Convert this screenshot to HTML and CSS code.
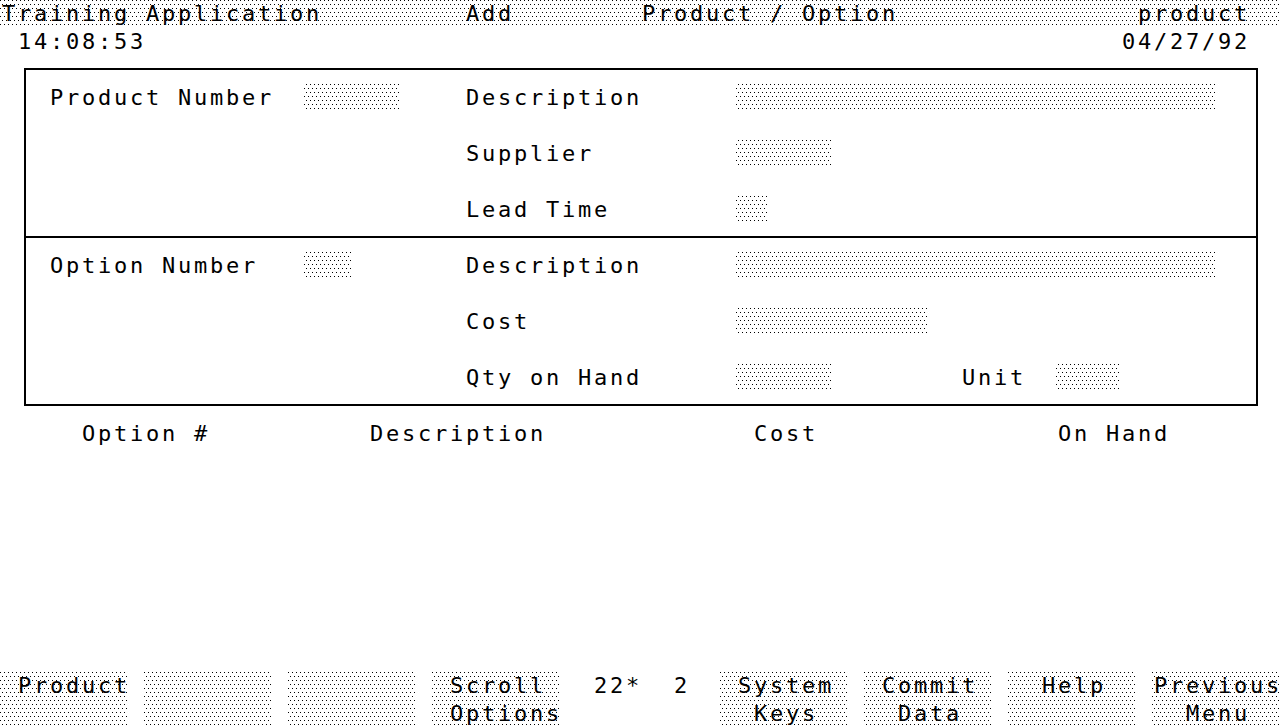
FILE: index.html
```html
<!DOCTYPE html>
<html lang="en">
<head>
    <meta charset="UTF-8">
    <title>Training Application - Add Product / Option</title>
    <link rel="stylesheet" href="styles.css">
</head>
<body>

    <div class="screen">
        <!-- Top banner -->
        <div class="title-bar stipple">
            <span>Training Application</span>
            <span>Add</span>
            <span>Product / Option</span>
            <span>product</span>
        </div>
        <div class="status-line">
            <span>14:08:53</span>
            <span>04/27/92</span>
        </div>

        <!-- Entry form -->
        <div class="form-box">
            <div class="form-block">
                <div class="lbl-left">Product Number</div>
                <div class="field stipple w6"></div>
                <div class="lbl-right">Description</div>
                <div class="field stipple w30"></div>

                <div class="lbl-right">Supplier</div>
                <div class="field stipple w6"></div>

                <div class="lbl-right">Lead Time</div>
                <div class="field stipple w2"></div>
            </div>
            <div class="form-block divided">
                <div class="lbl-left">Option Number</div>
                <div class="field stipple w3"></div>
                <div class="lbl-right">Description</div>
                <div class="field stipple w30"></div>

                <div class="lbl-right">Cost</div>
                <div class="field stipple w12"></div>

                <div class="lbl-right">Qty on Hand</div>
                <div class="field-row">
                    <div class="field stipple w6"></div>
                    <span class="unit-label">Unit</span>
                    <div class="field stipple w4"></div>
                </div>
            </div>
        </div>

        <!-- Scroll list heading -->
        <div class="list-head">
            <span>Option #</span>
            <span>Description</span>
            <span>Cost</span>
            <span>On Hand</span>
        </div>

        <!-- Function keys -->
        <div class="softkeys">
            <div class="key stipple"> Product</div>
            <div class="key stipple"></div>
            <div class="key stipple"></div>
            <div class="key stipple"> Scroll
 Options</div>
            <div class="key-status"> 22*  2</div>
            <div class="key stipple"> System
  Keys</div>
            <div class="key stipple"> Commit
  Data</div>
            <div class="key stipple">  Help</div>
            <div class="key stipple">Previous
  Menu</div>
        </div>
    </div>

</body>
</html>
```

FILE: styles.css
```css
/* Terminal grid: 80 columns x 16px, rows of 28px */
* {
    margin: 0;
    padding: 0;
    box-sizing: border-box;
}

html, body {
    background: #ffffff;
    overflow: hidden;
}

body {
    font-family: "DejaVu Sans Mono", monospace;
    font-size: 22px;
    letter-spacing: 2.755px;
    line-height: 28px;
    color: #000000;
}

.screen {
    width: 1280px;
    height: 726px;
    display: flex;
    flex-direction: column;
    overflow: hidden;
}

/* Halftone fill used for the banner, fields and keys */
.stipple {
    background-image:
        conic-gradient(from 270deg at 1px 1px, #000 25%, transparent 0),
        conic-gradient(from 270deg at 1px 1px, #000 25%, transparent 0);
    background-size: 4px 8px;
    background-position: 0 0, 2px 4px;
    background-attachment: fixed;
}

/* Header */
.title-bar {
    height: 28px;
    display: grid;
    grid-template-columns: 464px 176px 496px auto;
    padding-left: 2px;
    white-space: pre;
}

.status-line {
    height: 28px;
    display: flex;
    justify-content: space-between;
    padding: 0 30px 0 18px;
}

/* Form box */
.form-box {
    margin: 12px 22px 14px 24px;
    border: 2px solid #000000;
}

.form-block {
    display: grid;
    grid-template-columns: 272px 160px 272px 1fr;
    grid-auto-rows: 28px;
    row-gap: 28px;
    padding: 14px 0 12px 6px;
    white-space: pre;
}

.form-block.divided {
    border-top: 2px solid #000000;
}

.lbl-left {
    grid-column: 1;
    padding-left: 18px;
}

.lbl-right {
    grid-column: 3;
    padding-left: 2px;
}

.field {
    height: 28px;
    justify-self: start;
}

.w2 { width: 32px; }
.w3 { width: 48px; }
.w4 { width: 64px; }
.w6 { width: 96px; }
.w12 { width: 192px; }
.w30 { width: 480px; }

.field-row {
    display: flex;
}

.unit-label {
    width: 96px;
    margin-left: 128px;
    padding-left: 2px;
}

/* List heading */
.list-head {
    height: 28px;
    display: grid;
    grid-template-columns: 288px 384px 304px auto;
    padding-left: 82px;
    white-space: pre;
}

/* Softkey labels */
.softkeys {
    margin-top: auto;
    height: 54px;
    display: flex;
    gap: 16px;
}

.key,
.key-status {
    width: 128px;
    height: 54px;
    padding-left: 2px;
    white-space: pre;
    overflow: visible;
}
```
